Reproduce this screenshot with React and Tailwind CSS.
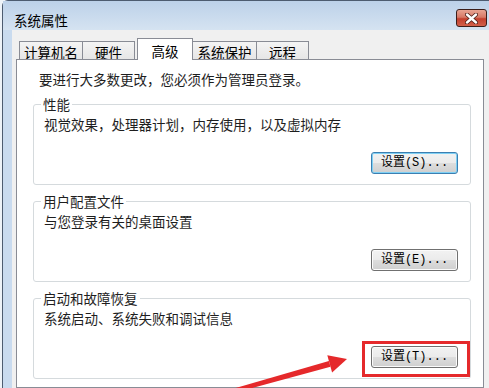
import React from 'react';

const uiFont = { fontFamily: '"Noto Sans CJK SC", "Noto Sans", sans-serif' };
const btnFont = { fontFamily: '"Liberation Mono", "Noto Sans CJK SC", monospace' };

const tabs = [
  { label: '计算机名', w: 'w-[64px]' },
  { label: '硬件', w: 'w-[52px]' },
  { label: '高级', w: 'w-[56px]', active: true },
  { label: '系统保护', w: 'w-[64px]' },
  { label: '远程', w: 'w-[52px]' },
];

const SettingsButton = ({ label, focused, marked }) => (
  <div className="relative flex">
    <button
      className={
        'block w-[87px] h-[22px] rounded-[3px] border text-[12px] leading-[20px] text-black ' +
        'bg-[linear-gradient(to_bottom,#f2f2f2_0%,#ebebeb_50%,#dddddd_51%,#cfcfcf_100%)] ' +
        (focused
          ? 'border-[#3c7fb1] shadow-[inset_0_0_0_1px_#7fd0f4]'
          : 'border-[#707070] shadow-[inset_0_0_0_1px_#fbfbfb]')
      }
      style={btnFont}
    >
      {label}
    </button>
    {marked && (
      <div className="absolute -left-[9px] -top-[5px] -right-[12px] -bottom-[9px] border-[3px] border-[#e5292b]" />
    )}
  </div>
);

const Group = ({ title, text, button, focused, marked, className }) => (
  <fieldset className={'ml-[16px] mr-[12px] border border-[#d5dadd] rounded-[3px] ' + className}>
    <legend className="ml-[7px] px-[2px] text-[13.5px] leading-[16px] text-[#1e1e1e]">{title}</legend>
    <div className="pl-[10px] pt-[4px] text-[13.5px] leading-[16px] text-[#1e1e1e]">{text}</div>
    <div className="flex justify-end mt-[20px] pr-[12px] pb-[10px]">
      <SettingsButton label={button} focused={focused} marked={marked} />
    </div>
  </fieldset>
);

const App = () => {
  return (
    <div className="relative w-[489px] h-[388px] overflow-hidden bg-[#eef3f8]" style={uiFont}>
      <div className="ml-[2px] h-full flex flex-col border-l border-t border-[#4d5c70] rounded-tl-[6px] bg-[#c9dbef]">
        {/* title bar */}
        <div className="h-[29px] flex items-start justify-between bg-[linear-gradient(to_bottom,#bcd1e9,#d5e3f1)]">
          <span className="pl-[11px] pt-[11px] text-[13.5px] leading-[16px] text-black">系统属性</span>
          <button className="mt-[8px] mr-[2px] w-[31px] h-[18px] rounded-[3px] border border-[#3b1e1a] bg-[linear-gradient(to_bottom,#e8a493_0%,#d77967_45%,#c3402e_55%,#d2604a_100%)] flex items-center justify-center">
            <svg width="13" height="11" viewBox="0 0 13 11">
              <path d="M2 1.5 L11 9.5 M11 1.5 L2 9.5" stroke="#4a1c16" strokeWidth="4" strokeLinecap="round" />
              <path d="M2 1.5 L11 9.5 M11 1.5 L2 9.5" stroke="#ffffff" strokeWidth="2.4" strokeLinecap="round" />
            </svg>
          </button>
        </div>

        {/* body */}
        <div className="flex-1 flex">
          <div className="w-[9px] bg-[#c9dbef]" />
          <div className="flex-1 flex flex-col bg-[#f0f0f0] pl-[4px] pr-[5px] pt-[8px]">
            {/* tabs */}
            <div className="flex items-end h-[21px] pl-[3px]">
              {tabs.map((t, i) =>
                t.active ? (
                  <div
                    key={t.label}
                    className={`${t.w} ml-[2px] h-[22px] -mb-px relative z-10 border border-b-0 border-[#898c95] bg-white flex justify-center pt-[4px] text-[13.5px] leading-[16px] text-black`}
                  >
                    {t.label}
                  </div>
                ) : (
                  <div
                    key={t.label}
                    className={`${t.w} h-[18px] border-t border-r border-[#898c95] ${i === 0 ? 'border-l' : ''} bg-[linear-gradient(to_bottom,#f4f4f4,#e6e6e6)] flex justify-center pt-[2px] text-[13.5px] leading-[16px] text-black`}
                  >
                    {t.label}
                  </div>
                )
              )}
            </div>

            {/* panel */}
            <div className="flex-1 border border-[#898c95] bg-white">
              <p className="pt-[11px] pl-[22px] text-[13.5px] leading-[16px] text-[#1e1e1e]">
                要进行大多数更改，您必须作为管理员登录。
              </p>
              <Group
                className="mt-[9px]"
                title="性能"
                text="视觉效果，处理器计划，内存使用，以及虚拟内存"
                button="设置(S)..."
                focused
              />
              <Group
                className="mt-[8px]"
                title="用户配置文件"
                text="与您登录有关的桌面设置"
                button="设置(E)..."
              />
              <Group
                className="mt-[8px]"
                title="启动和故障恢复"
                text="系统启动、系统失败和调试信息"
                button="设置(T)..."
                marked
              />
            </div>
          </div>
        </div>
      </div>

      {/* annotation arrow */}
      <svg className="absolute inset-0 pointer-events-none" width="489" height="388" viewBox="0 0 489 388">
        <polygon points="213.6,394.4 214.6,398.2 330.5,366.8 328.9,361" fill="#e5292b" />
        <polygon points="347,359 327.3,355.2 332.1,372.6" fill="#e5292b" />
      </svg>
    </div>
  );
};

export default App;
